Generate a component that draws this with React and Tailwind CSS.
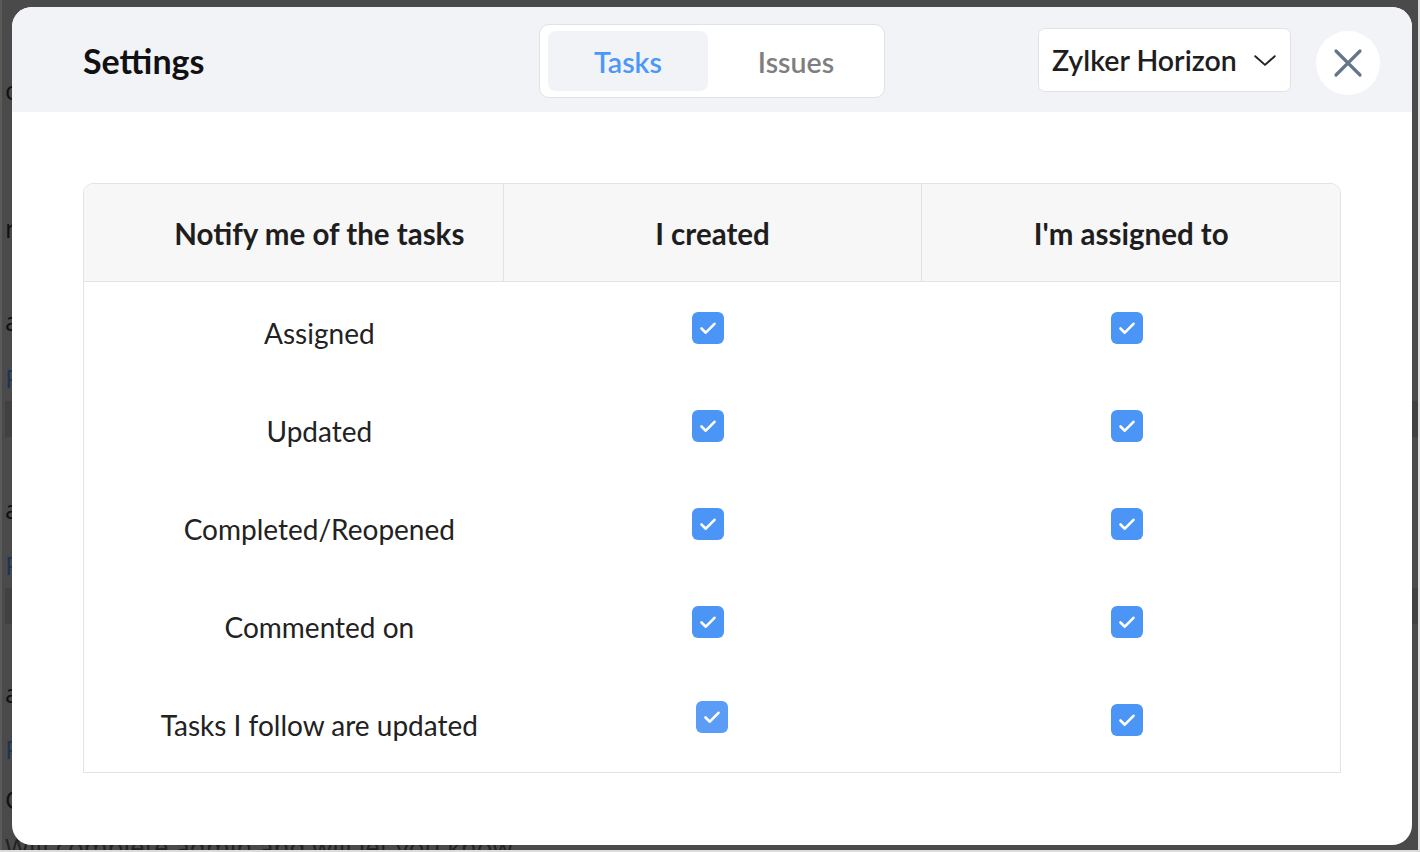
import React, { useState } from "react";

const FONT = { fontFamily: "Lato, 'Noto Sans', sans-serif" };

const ROWS = [
  { label: "Assigned", created: true, assigned: true },
  { label: "Updated", created: true, assigned: true },
  { label: "Completed/Reopened", created: true, assigned: true },
  { label: "Commented on", created: true, assigned: true },
  { label: "Tasks I follow are updated", created: true, assigned: true, odd: true },
];

function Check({ checked, onChange, odd }) {
  return (
    <button
      onClick={onChange}
      className={
        "grid h-[32px] w-[32px] place-items-center rounded-[6px] " +
        (checked ? (odd ? "bg-[#5b9cf6]" : "bg-[#4a95f6]") : "border-2 border-[#c9ced6] bg-white")
      }
    >
      {checked && (
        <svg width="24" height="24" viewBox="0 0 24 24" fill="none">
          <path d="M5.5 12.5l4.3 4.2 8.7-8.9" stroke="white" strokeWidth="2.6" strokeLinecap="round" strokeLinejoin="round" />
        </svg>
      )}
    </button>
  );
}

function BackgroundPage() {
  return (
    <div className="h-full w-full bg-[#4a4a4a] pl-[3px] text-[26px] leading-none" style={{ fontFamily: "'Open Sans', sans-serif" }}>
      <div className="pt-[77px] text-[#111]">ok, thanks</div>
      <div className="pt-[112px] text-[#111]">reviewed</div>
      <div className="pt-[67px] text-[#111]">admin</div>
      <div className="pt-[31px] text-[#1c3456]">Project</div>
      <div className="mt-[10px] h-[36px] bg-[#414141]" />
      <div className="pt-[59px] text-[#111]">admin</div>
      <div className="pt-[30px] text-[#1c3456]">Project</div>
      <div className="mt-[10px] h-[36px] bg-[#414141]" />
      <div className="pt-[56px] text-[#111]">admin</div>
      <div className="pt-[30px] text-[#1c3456]">Project</div>
      <div className="pt-[24px] text-[#111]">Comment</div>
      <div className="whitespace-nowrap pt-[22px] text-[#222]">Will complete admin and will let you know</div>
    </div>
  );
}

export default function App() {
  const [tab, setTab] = useState("Tasks");
  const [rows, setRows] = useState(ROWS);

  const toggle = (i, key) =>
    setRows((r) => r.map((row, j) => (j === i ? { ...row, [key]: !row[key] } : row)));

  return (
    <div className="relative h-[852px] w-[1420px] overflow-hidden bg-[#dcdcdc]" style={FONT}>
      <div className="h-[850px] w-[1418px] overflow-hidden border-l-2 border-[#5a5a5a]">
        <BackgroundPage />
      </div>

      {/* Modal */}
      <div className="absolute left-[12px] top-[7px] flex h-[838px] w-[1400px] flex-col overflow-hidden rounded-[20px] bg-white">
        <div className="grid h-[105px] grid-cols-[1fr_auto_1fr] items-center bg-[#f2f3f7] px-[32px]">
          <h1 className="pl-[39px] pt-[2px] text-[34px] font-bold text-[#111]">Settings</h1>

          <div className="mt-[2px] flex rounded-[10px] border border-[#e2e2e2] bg-white py-[6px] pl-[8px]">
            {["Tasks", "Issues"].map((t, i) => (
              <button
                key={t}
                onClick={() => setTab(t)}
                className={
                  "h-[60px] rounded-[8px] pt-[3px] text-[28.5px] font-semibold " +
                  (i === 0 ? "w-[160px] " : "w-[176px] ") +
                  (tab === t ? "bg-[#f2f3f7] text-[#4a98f7]" : "text-[#7f7f7f]")
                }
              >
                {t}
              </button>
            ))}
          </div>

          <div className="flex items-center justify-end gap-[25px]">
            <button className="mt-[1px] flex h-[64px] w-[253px] items-center justify-between rounded-[7px] border border-[#e2e2e2] bg-white pl-[13px] pr-[12px]">
              <span className="text-[28.5px] font-semibold text-[#1e1e1e]">Zylker Horizon</span>
              <svg width="26" height="26" viewBox="0 0 24 24" fill="none">
                <path d="M3 8.5l9 8 9-8" stroke="#222" strokeWidth="1.8" strokeLinecap="round" strokeLinejoin="round" />
              </svg>
            </button>
            <button className="mt-[7px] grid h-[64px] w-[64px] place-items-center rounded-full bg-white">
              <svg width="30" height="30" viewBox="0 0 30 30" fill="none">
                <path d="M3 3l24 24M27 3L3 27" stroke="#66768a" strokeWidth="3.2" strokeLinecap="round" />
              </svg>
            </button>
          </div>
        </div>

        <div className="px-[71px] pt-[71px]">
          <div className="overflow-hidden rounded-t-[10px] border border-[#e3e3e3]">
            <div className="grid h-[98px] grid-cols-3 border-b border-[#e3e3e3] bg-[#f7f7f7] pt-[4px] text-[29.5px] font-bold text-[#1e1e1e]">
              <div className="flex items-center justify-center pl-[52px]">Notify me of the tasks</div>
              <div className="-mt-[4px] flex items-center justify-center border-l border-[#e3e3e3] pt-[4px]">I created</div>
              <div className="-mt-[4px] flex items-center justify-center border-l border-[#e3e3e3] pt-[4px]">I'm assigned to</div>
            </div>
            {rows.map((row, i) => (
              <div key={row.label} className="grid h-[98px] grid-cols-3 text-[28px] text-[#222]">
                <div className="flex items-center justify-center pl-[52px] pt-[4px]">{row.label}</div>
                <div className="flex items-center justify-center">
                  <div className={row.odd ? "mb-[12px] ml-[1px]" : "mb-[6px] mr-[8px]"}>
                    <Check checked={row.created} odd={row.odd} onChange={() => toggle(i, "created")} />
                  </div>
                </div>
                <div className="flex items-center justify-center">
                  <div className="mb-[6px] mr-[8px]">
                    <Check checked={row.assigned} onChange={() => toggle(i, "assigned")} />
                  </div>
                </div>
              </div>
            ))}
          </div>
        </div>
      </div>
    </div>
  );
}
